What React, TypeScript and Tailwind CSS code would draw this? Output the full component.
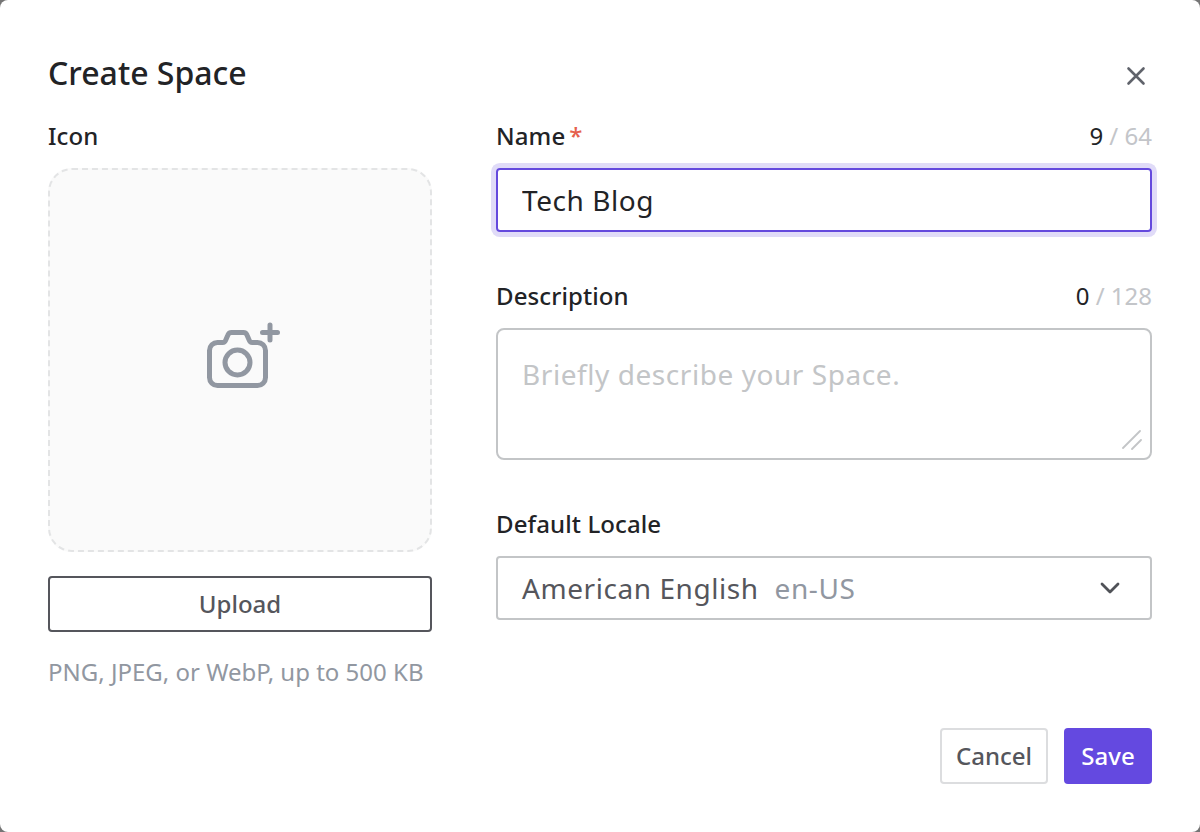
import { useState } from "react";

interface FieldLabelProps {
  text: string;
  required?: boolean;
  count?: number;
  max?: number;
}

function FieldLabel({ text, required, count, max }: FieldLabelProps) {
  return (
    <div className="flex h-8 items-center justify-between text-2xl">
      <span className="font-medium tracking-[0.1px] text-[#222326]">
        {text}
        {required && <span className="ml-1 text-[#e5604d]">*</span>}
      </span>
      {max !== undefined && (
        <span className="text-[#c3c5c9]">
          <span className="text-[#222326]">{count}</span> / {max}
        </span>
      )}
    </div>
  );
}

function CameraPlusIcon() {
  return (
    <svg
      className="h-20 w-20"
      viewBox="0 0 80 80"
      fill="none"
      stroke="#9197a1"
      strokeWidth="5"
      strokeLinecap="round"
      strokeLinejoin="round"
    >
      <path d="M17.5 22.5h5.2c1.5 0 2.4-.8 2.9-2.1l2.2-5.2c.7-1.8 1.8-2.7 3.7-2.7h11.9c1.9 0 3 .9 3.7 2.7l2.2 5.2c.5 1.3 1.4 2.1 2.9 2.1h5.3a8 8 0 0 1 8 8v27a8 8 0 0 1-8 8h-40a8 8 0 0 1-8-8v-27a8 8 0 0 1 8-8z" />
      <circle cx="37.5" cy="42.5" r="12.5" />
      <path d="M62.5 12.5h15M70 5v15" />
    </svg>
  );
}

export default function App() {
  const [name, setName] = useState("Tech Blog");
  const [description, setDescription] = useState("");

  return (
    <div className="h-[832px] w-[1200px] overflow-hidden bg-[#757575] font-['Noto_Sans',sans-serif]">
      <div className="flex h-full flex-col rounded-lg bg-white p-12">
        {/* Header */}
        <div className="flex h-[72px] items-start justify-between">
          <h1 className="text-[32px] leading-[50px] font-medium text-[#222326]">
            Create Space
          </h1>
          <button aria-label="Close" className="mt-3 flex h-8 w-8 items-center justify-center">
            <svg className="h-8 w-8" viewBox="0 0 32 32" fill="none" stroke="#60636b" strokeWidth="2.6" strokeLinecap="round">
              <path d="M8.5 8.5l15 15M23.5 8.5l-15 15" />
            </svg>
          </button>
        </div>

        <div className="flex flex-1 gap-16">
          {/* Icon Section */}
          <div className="w-96">
            <FieldLabel text="Icon" />
            <div className="mt-4 flex h-96 items-center justify-center rounded-3xl border-2 border-dashed border-[#e3e4e5] bg-[#fafafa]">
              <CameraPlusIcon />
            </div>
            <button className="mt-6 flex h-14 w-full items-center justify-center rounded-[4px] border-2 border-[#55565c] text-2xl font-medium text-[#55565c]">
              Upload
            </button>
            <p className="mt-6 text-2xl leading-8 text-[#9197a1]">
              PNG, JPEG, or WebP, up to 500 KB
            </p>
          </div>

          {/* Details Section */}
          <div className="flex-1">
            <FieldLabel text="Name" required count={name.length} max={64} />
            <input
              value={name}
              onChange={(e) => setName(e.target.value)}
              className="mt-4 block h-16 w-full rounded-[4px] border-2 border-[#6449dd] px-6 text-[28px] tracking-[0.56px] text-[#222326] ring-[5px] ring-[#e0dbf8] outline-none"
            />

            <div className="mt-12">
              <FieldLabel text="Description" count={description.length} max={128} />
              <div className="relative mt-4">
                <textarea
                  value={description}
                  onChange={(e) => setDescription(e.target.value)}
                  placeholder="Briefly describe your Space."
                  className="block h-[132px] w-full resize-none rounded-lg border-2 border-[#c3c5c7] px-6 py-6 text-[28px] leading-10 tracking-[0.56px] text-[#222326] outline-none placeholder:text-[#c3c5c7]"
                />
                <svg
                  className="pointer-events-none absolute right-2.5 bottom-2.5 h-5 w-5"
                  viewBox="0 0 20 20"
                  fill="none"
                  stroke="#c3c5c7"
                  strokeWidth="1.8"
                  strokeLinecap="round"
                >
                  <path d="M1 18L18 1M10 19l9-9" />
                </svg>
              </div>
            </div>

            <div className="mt-12">
              <FieldLabel text="Default Locale" />
              <button className="mt-4 flex h-16 w-full items-center rounded-[4px] border-2 border-[#c3c5c7] pr-6 pl-6 text-[28px] tracking-[0.56px] text-[#55565c]">
                American English
                <span className="ml-4 text-[#9197a1]">en-US</span>
                <svg className="ml-auto h-8 w-8" viewBox="0 0 32 32" fill="none" stroke="#505258" strokeWidth="2.8" strokeLinecap="round" strokeLinejoin="round">
                  <path d="M8 12l8 8 8-8" />
                </svg>
              </button>
            </div>
          </div>
        </div>

        {/* Footer */}
        <div className="flex justify-end gap-4 text-2xl font-medium">
          <button className="h-14 w-[108px] rounded-[4px] border-2 border-[#dcdddf] text-[#55565c]">
            Cancel
          </button>
          <button className="h-14 w-[88px] rounded-[4px] bg-[#6449e0] text-white">
            Save
          </button>
        </div>
      </div>
    </div>
  );
}
